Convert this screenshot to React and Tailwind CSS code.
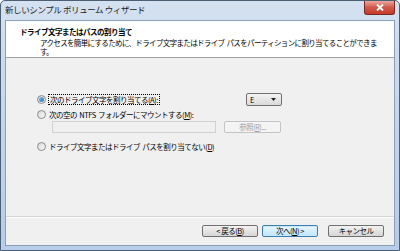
import React from "react";

const jp = { fontFamily: '"Noto Sans CJK JP", "Noto Sans", sans-serif' };

function Radio({ checked }) {
    return (
        <div className="w-[9px] h-[9px] rounded-full border border-[#8a8a8a] bg-gradient-to-br from-[#d8d8d8] to-[#fbfbfb] flex items-center justify-center shrink-0">
            {checked && (
                <div className="w-[5px] h-[5px] rounded-full bg-gradient-to-br from-[#7fc4ee] to-[#1a6fb3]" />
            )}
        </div>
    );
}

function Button({ children, primary }) {
    return (
        <div
            className={
                "w-[56px] h-[12px] rounded-[2px] border flex items-center justify-center text-[7.5px] leading-none tracking-[-0.5px] " +
                (primary
                    ? "border-[#3c7fb1] bg-gradient-to-b from-[#eaf6fd] to-[#bee6fd] shadow-[inset_0_0_0_1px_#c8e9fb]"
                    : "border-[#707070] bg-gradient-to-b from-[#f2f2f2] to-[#d6d6d6]")
            }
        >
            {children}
        </div>
    );
}

export default function App() {
    return (
        <div
            className="w-[400px] h-[251px] flex flex-col bg-gradient-to-b from-[#d4e1f0] via-[#c2d5ec] to-[#b6cce8] border border-[#4d5f73] rounded-t-[5px] overflow-hidden text-black"
            style={jp}
        >
            {/* title bar */}
            <div className="h-[19px] flex items-start shrink-0">
                <div className="pl-[4px] pt-[3px] text-[8.5px] leading-[10px] tracking-[-0.4px] text-[#1b1b1b]">
                    新しいシンプル&nbsp;ボリューム&nbsp;ウィザード
                </div>
                <div className="ml-auto mr-[4px] w-[31px] h-[14px] rounded-b-[3px] border border-t-0 border-[#7a2a22] bg-gradient-to-b from-[#e9a99c] via-[#d0584a] to-[#c43b2c] flex items-center justify-center">
                    <svg width="8" height="7" viewBox="0 0 8 7">
                        <path d="M1 0.5 L7 6.5 M7 0.5 L1 6.5" stroke="#fff" strokeWidth="1.8" />
                    </svg>
                </div>
            </div>

            {/* client area */}
            <div className="flex-1 mx-[4px] flex flex-col border border-[#8b9fb6] bg-[#f0f0f0]">
                {/* header */}
                <div className="h-[37px] bg-white border-b border-[#a0a0a0] pl-[14px] pt-[6px] shrink-0">
                    <div className="text-[7.5px] leading-[9px] font-bold tracking-[-0.5px]">
                        ドライブ文字またはパスの割り当て
                    </div>
                    <div className="pl-[20px] mt-[1.5px] text-[7.5px] leading-[9.5px] tracking-[-0.65px] whitespace-nowrap">
                        アクセスを簡単にするために、ドライブ文字またはドライブ&nbsp;&nbsp;パスをパーティションに割り当てることができま
                        <br />
                        す。
                    </div>
                </div>

                {/* body */}
                <div className="flex-1 pl-[31px] pt-[35px] text-[7.5px] tracking-[-0.5px]">
                    <div className="w-[245px] flex flex-col">
                        <div className="h-[13px] flex items-center">
                            <Radio checked />
                            <span className="ml-[2px] px-[1px] leading-[9px] border border-dotted border-black">
                                次のドライブ文字を割り当てる(<u>A</u>):
                            </span>
                            <div className="ml-auto w-[36px] h-[13px] rounded-[2px] border border-[#707070] bg-gradient-to-b from-[#f4f4f4] to-[#d9d9d9] flex items-center pl-[3px] pr-[5px]">
                                <span className="leading-none">E</span>
                                <svg className="ml-auto" width="5" height="3" viewBox="0 0 5 3">
                                    <path d="M0 0 H5 L2.5 3 Z" fill="#222" />
                                </svg>
                            </div>
                        </div>
                        <div className="mt-[3px] h-[10px] flex items-center">
                            <Radio />
                            <span className="ml-[3px] leading-[9px]">
                                次の空の&nbsp;&nbsp;NTFS&nbsp;&nbsp;フォルダーにマウントする(<u>M</u>):
                            </span>
                        </div>
                        <div className="mt-[2px] ml-[15px] flex items-center gap-[8px]">
                            <div className="w-[164px] h-[12px] border border-[#d0d0d0] bg-[#f0f0f0]" />
                            <div className="w-[57px] h-[12px] rounded-[2px] border border-[#c4c4c4] bg-[#f4f4f4] flex items-center justify-center text-[#a0a0a0] leading-none">
                                参照(<u>R</u>)...
                            </div>
                        </div>
                        <div className="mt-[8px] h-[10px] flex items-center">
                            <Radio />
                            <span className="ml-[3px] leading-[9px]">
                                ドライブ文字またはドライブ&nbsp;&nbsp;パスを割り当てない(<u>D</u>)
                            </span>
                        </div>
                    </div>
                </div>

                {/* separator + buttons */}
                <div className="h-[2px] border-t border-[#d5d5d5] border-b-white border-b shrink-0" />
                <div className="h-[27px] flex items-start pt-[7px] pl-[196px] shrink-0">
                    <Button>&lt; 戻る(<u>B</u>)</Button>
                    <div className="ml-[4px]">
                        <Button primary>次へ(<u>N</u>) &gt;</Button>
                    </div>
                    <div className="ml-[10px]">
                        <Button>キャンセル</Button>
                    </div>
                </div>
            </div>

            {/* bottom frame */}
            <div className="h-[4px] shrink-0" />
        </div>
    );
}
